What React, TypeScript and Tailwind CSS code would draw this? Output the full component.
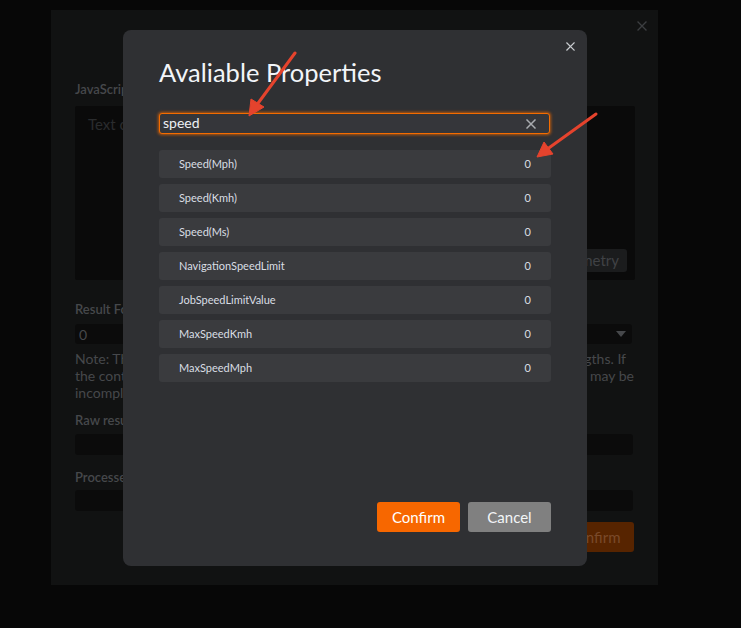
import React from "react";

const rows = [
  "Speed(Mph)",
  "Speed(Kmh)",
  "Speed(Ms)",
  "NavigationSpeedLimit",
  "JobSpeedLimitValue",
  "MaxSpeedKmh",
  "MaxSpeedMph",
];

function XIcon({ size, color, width }: { size: number; color: string; width: number }) {
  return (
    <svg width={size} height={size} viewBox="0 0 10 10" fill="none">
      <path d="M1 1L9 9M9 1L1 9" stroke={color} strokeWidth={width} strokeLinecap="square" />
    </svg>
  );
}

export default function App() {
  const font = { fontFamily: "Lato, 'Noto Sans', sans-serif" };
  return (
    <div className="relative h-[628px] w-full overflow-hidden bg-[#070707] pt-[10px] pl-[51px]" style={font}>
      {/* Background dialog */}
      <div className="relative flex h-[575px] w-[607px] flex-col bg-[#111212] px-[24px] pt-[70px]">
        <div className="absolute right-[11px] top-[11px]">
          <XIcon size={10} color="#3c3e41" width={1.3} />
        </div>
        <div className="h-[18px] text-[13px] font-semibold leading-[18px] text-[#46484b]">JavaScript Code</div>
        <div className="relative mt-[8px] h-[174px] w-[560px] rounded-[2px] bg-[#0a0a0a] pl-[13px] pt-[8px]">
          <div className="text-[15px] leading-[20px] text-[#2a2c2e]">Text content here</div>
          <div className="absolute bottom-[8px] right-[8px] flex h-[23px] items-center rounded-[3px] bg-[#1b1c1d] px-[8px] text-[15px] text-[#404245]">
            Insert Telemetry
          </div>
        </div>
        <div className="mt-[20px] h-[18px] text-[13px] font-semibold leading-[18px] text-[#46484b]">Result Format</div>
        <div className="mt-[6px] flex h-[20px] w-[557px] items-center justify-between rounded-[3px] bg-[#0b0b0b] pl-[4px] pr-[6px] text-[14px] text-[#46484b]">
          <span>0</span>
          <svg width="10" height="7" viewBox="0 0 10 7">
            <path d="M0 0H10L5 6Z" fill="#46484b" />
          </svg>
        </div>
        <div className="mt-[6px] w-[559px] text-[14px] leading-[17px] text-[#46484b]">
          <div className="flex justify-between pr-[8px]">
            <span>Note: The result box displays data of limited</span>
            <span>lengths. If</span>
          </div>
          <div className="flex justify-between">
            <span>the content exceeds the limit, the result</span>
            <span>may be</span>
          </div>
          <div>incomplete.</div>
        </div>
        <div className="mt-[10px] h-[18px] text-[13px] font-semibold leading-[18px] text-[#46484b]">Raw result</div>
        <div className="mt-[5px] h-[21px] w-[558px] rounded-[3px] bg-[#0b0b0b]" />
        <div className="mt-[13px] h-[18px] text-[13px] font-semibold leading-[18px] text-[#46484b]">Processed result</div>
        <div className="mt-[4px] h-[21px] w-[558px] rounded-[3px] bg-[#0b0b0b]" />
        <div className="mt-[11px] flex h-[30px] w-[80px] items-center justify-center self-end rounded-[3px] bg-[#572400] text-[15px] text-[#7a4a2a]">
          Confirm
        </div>
      </div>

      {/* Modal */}
      <div className="absolute left-[123px] top-[30px] flex h-[536px] w-[464px] flex-col rounded-[8px] bg-[#2f3033] pl-[36px] pr-[36px] pb-[34px] pt-[22px]">
        <div className="absolute right-[12px] top-[12px]">
          <XIcon size={9} color="#c9ccd0" width={1.4} />
        </div>
        <div className="text-[25.5px] leading-[40px] text-[#f2f5f9]">Avaliable Properties</div>
        <div className="mt-[21px] flex h-[21px] w-[391px] items-center justify-between rounded-[3px] border-[1.5px] border-[#f46c00] bg-[#35363a] pl-[3px] pr-[13px] shadow-[0_0_3px_1px_rgba(240,106,0,0.7)]">
          <span className="-mt-[2px] text-[14px] leading-[18px] text-[#eef1f4]">speed</span>
          <XIcon size={10} color="#a9acb0" width={1.5} />
        </div>
        <div className="mt-[16px] flex flex-col gap-[6px]">
          {rows.map((r) => (
            <div
              key={r}
              className="flex h-[28px] w-[392px] items-center justify-between rounded-[3px] bg-[#3a3b3e] pl-[20px] pr-[20px] text-[11px] text-[#d9dee4]"
            >
              <span>{r}</span>
              <span>0</span>
            </div>
          ))}
        </div>
        <div className="mt-auto flex justify-end gap-[8px]">
          <div className="flex h-[30px] w-[83px] items-center justify-center rounded-[3px] bg-[#f76700] text-[15px] text-white">
            Confirm
          </div>
          <div className="flex h-[30px] w-[83px] items-center justify-center rounded-[3px] bg-[#808080] text-[15px] text-[#f3f5f7]">
            Cancel
          </div>
        </div>
      </div>

      {/* Annotation arrows */}
      <svg className="pointer-events-none absolute left-0 top-0" width="741" height="628" viewBox="0 0 741 628">
        <line x1="295" y1="53" x2="256" y2="106" stroke="#e5432d" strokeWidth="3" strokeLinecap="round" />
        <path d="M249 116 L251 99 L264 107 Z" fill="#e5432d" stroke="#e5432d" strokeWidth="1" strokeLinejoin="round" />
        <line x1="596" y1="114" x2="546" y2="150" stroke="#e5432d" strokeWidth="3" strokeLinecap="round" />
        <path d="M537 157 L544 142 L553 154 Z" fill="#e5432d" stroke="#e5432d" strokeWidth="1" strokeLinejoin="round" />
      </svg>
    </div>
  );
}
